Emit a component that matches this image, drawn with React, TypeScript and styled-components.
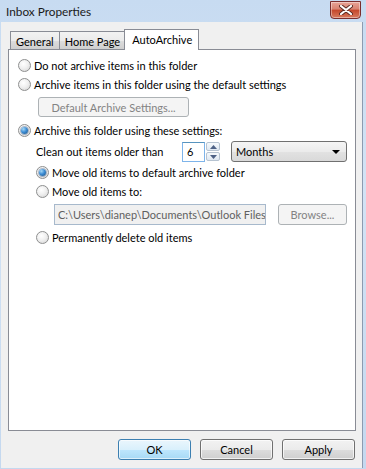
import styled, { createGlobalStyle, css } from "styled-components";

const GlobalStyle = createGlobalStyle`
  html, body {
    margin: 0;
    padding: 0;
    width: 366px;
    height: 469px;
    overflow: hidden;
    background: #ffffff;
  }
  * {
    box-sizing: border-box;
  }
`;

const Frame = styled.div`
  width: 366px;
  height: 469px;
  display: flex;
  flex-direction: column;
  background: linear-gradient(180deg, #c7dbf1 0%, #d3e3f5 40%, #c4d8ef 100%);
  font-family: "Segoe UI", Lato, "Noto Sans", sans-serif;
  font-size: 11px;
  color: #000;
`;

const TitleBar = styled.div`
  height: 22px;
  display: flex;
  align-items: flex-start;
  justify-content: space-between;
  padding: 0 5px 0 6px;
`;

const Title = styled.div`
  padding-top: 4px;
  font-size: 11.8px;
  color: #1a1a1a;
`;

const CloseButton = styled.div`
  width: 31px;
  height: 18px;
  margin-top: 1px;
  border: 1px solid #7a2e2e;
  border-radius: 0 0 4px 4px;
  background: linear-gradient(180deg, #e8a497 0%, #d88270 45%, #c5462a 50%, #d77a5f 100%);
  display: flex;
  align-items: center;
  justify-content: center;
  box-shadow: inset 0 0 0 1px rgba(255, 255, 255, 0.4);
`;

const Client = styled.div`
  flex: 1;
  margin: 0 3px 1px 1px;
  background: #f0f0f0;
  border-right: 1px solid #8c9bb0;
  display: flex;
  flex-direction: column;
  padding: 6px 6px 0 7px;
`;

const TabStrip = styled.div`
  display: flex;
  align-items: flex-end;
  height: 21px;
  padding-left: 2px;
  position: relative;
  z-index: 1;
`;

const Tab = styled.div<{ $active?: boolean }>`
  height: 18px;
  padding: 1px 5px 0 5px;
  border: 1px solid #898c95;
  border-bottom: none;
  margin-right: -1px;
  background: linear-gradient(180deg, #f2f2f2 0%, #ebebeb 50%, #dddddd 51%, #cfcfcf 100%);
  display: flex;
  align-items: center;
  ${({ $active }) =>
    $active &&
    css`
      height: 21px;
      margin-bottom: -1px;
      padding: 0 6px 2px 7px;
      margin-left: -1px;
      background: #ffffff;
    `}
`;

const Panel = styled.div`
  height: 382px;
  width: 348px;
  background: #ffffff;
  border: 1px solid #898c95;
  padding: 6px 0 0 9px;
  display: flex;
  flex-direction: column;
`;

const Option = styled.label`
  display: flex;
  align-items: center;
  gap: 3px;
  height: 19px;
  white-space: nowrap;
`;

const RadioDot = styled.span<{ $checked?: boolean }>`
  width: 13px;
  height: 13px;
  border-radius: 50%;
  border: 1px solid #8e8f8f;
  background: radial-gradient(circle at 40% 35%, #ffffff 0%, #f0f0f0 45%, #d2d2d2 100%);
  display: flex;
  align-items: center;
  justify-content: center;
  flex: none;
  ${({ $checked }) =>
    $checked &&
    css`
      &::after {
        content: "";
        width: 7px;
        height: 7px;
        border-radius: 50%;
        background: radial-gradient(circle at 35% 30%, #a6d9f5 0%, #3e8ed6 45%, #1c5180 100%);
        box-shadow: 0 0 0 1px rgba(30, 70, 120, 0.35);
      }
    `}
`;

const PushButton = styled.div<{ $disabled?: boolean; $default?: boolean; $width: number }>`
  width: ${({ $width }) => $width}px;
  height: 21px;
  border: 1px solid #707070;
  border-radius: 3px;
  background: linear-gradient(180deg, #f2f2f2 0%, #ebebeb 50%, #dddddd 51%, #cfcfcf 100%);
  box-shadow: inset 0 0 0 1px rgba(255, 255, 255, 0.7);
  display: flex;
  align-items: center;
  justify-content: center;
  color: #000;
  flex: none;
  ${({ $disabled }) =>
    $disabled &&
    css`
      border-color: #adb2b5;
      background: #f4f4f4;
      box-shadow: none;
      color: #838383;
    `}
  ${({ $default }) =>
    $default &&
    css`
      border-color: #3c7fb1;
      background: linear-gradient(180deg, #eaf6fd 0%, #d9f0fc 50%, #bee6fd 51%, #a7d9f5 100%);
      box-shadow: inset 0 0 0 1px rgba(255, 255, 255, 0.6);
    `}
`;

const DefaultSettingsButton = styled(PushButton)`
  height: 20px;
  margin: 3px 0 4px 20px;
`;

const SubBlock = styled.div`
  display: flex;
  flex-direction: column;
  padding-left: 18px;
`;

const CleanRow = styled.div`
  display: flex;
  align-items: center;
  height: 21px;
  margin: 1px 0;
`;

const CleanLabel = styled.span`
  width: 146px;
`;

const SpinBox = styled.div`
  width: 23px;
  height: 20px;
  border: 1px solid #7eb4ea;
  border-top-color: #5794bf;
  background: #fff;
  padding-left: 4px;
  display: flex;
  align-items: center;
`;

const SpinButtons = styled.div`
  display: flex;
  flex-direction: column;
  margin-left: 1px;
  gap: 1px;
`;

const SpinArrow = styled.div`
  width: 14px;
  height: 9px;
  border: 1px solid #b6c3d1;
  border-radius: 2px;
  background: linear-gradient(180deg, #f6f9fc 0%, #dfe8f1 100%);
  display: flex;
  align-items: center;
  justify-content: center;
`;

const Combo = styled.div`
  width: 116px;
  height: 21px;
  margin-left: 11px;
  border: 1px solid #707070;
  border-radius: 3px;
  background: linear-gradient(180deg, #f5f5f5 0%, #ebebeb 50%, #e2e2e2 51%, #d9d9d9 100%);
  display: flex;
  align-items: center;
  justify-content: space-between;
  padding: 0 6px 0 4px;
`;

const PathRow = styled.div`
  display: flex;
  align-items: center;
  height: 22px;
  margin: 2px 0 3px 18px;
  gap: 12px;
`;

const PathField = styled.input`
  width: 212px;
  height: 21px;
  margin: 0;
  border: 1px solid #a7b9cc;
  border-radius: 0;
  background: #f0f0f0;
  color: #5f5f5f;
  -webkit-text-fill-color: #5f5f5f;
  opacity: 1;
  padding: 0 0 0 3px;
  font: inherit;
  flex: none;
  outline: none;
`;

const Footer = styled.div`
  display: flex;
  justify-content: flex-end;
  gap: 9px;
  padding: 8px 1px 0 0;
`;

function Radio({ checked, label }: { checked?: boolean; label: string }) {
  return (
    <Option>
      <RadioDot $checked={checked} />
      <span>{label}</span>
    </Option>
  );
}

export default function App() {
  return (
    <>
      <GlobalStyle />
      <Frame>
        <TitleBar>
          <Title>Inbox Properties</Title>
          <CloseButton>
            <svg width="14" height="10" viewBox="0 0 14 10">
              <path
                d="M2 1 L12 9 M12 1 L2 9"
                stroke="#5a2a22"
                strokeWidth="4"
                strokeLinecap="round"
              />
              <path
                d="M2 1 L12 9 M12 1 L2 9"
                stroke="#ffffff"
                strokeWidth="2.2"
                strokeLinecap="round"
              />
            </svg>
          </CloseButton>
        </TitleBar>
        <Client>
          <TabStrip>
            <Tab>General</Tab>
            <Tab>Home Page</Tab>
            <Tab $active>AutoArchive</Tab>
          </TabStrip>
          <Panel>
            <Radio label="Do not archive items in this folder" />
            <Radio label="Archive items in this folder using the default settings" />
            <DefaultSettingsButton $disabled $width={151}>
              Default Archive Settings...
            </DefaultSettingsButton>
            <Radio checked label="Archive this folder using these settings:" />
            <SubBlock>
              <CleanRow>
                <CleanLabel>Clean out items older than</CleanLabel>
                <SpinBox>6</SpinBox>
                <SpinButtons>
                  <SpinArrow>
                    <svg width="7" height="4" viewBox="0 0 7 4">
                      <path d="M0 4 L3.5 0 L7 4 Z" fill="#4d6185" />
                    </svg>
                  </SpinArrow>
                  <SpinArrow>
                    <svg width="7" height="4" viewBox="0 0 7 4">
                      <path d="M0 0 L3.5 4 L7 0 Z" fill="#4d6185" />
                    </svg>
                  </SpinArrow>
                </SpinButtons>
                <Combo>
                  <span>Months</span>
                  <svg width="8" height="4" viewBox="0 0 8 4">
                    <path d="M0 0 L8 0 L4 4 Z" fill="#000" />
                  </svg>
                </Combo>
              </CleanRow>
              <Radio checked label="Move old items to default archive folder" />
              <Radio label="Move old items to:" />
              <PathRow>
                <PathField
                  disabled
                  readOnly
                  value="C:\Users\dianep\Documents\Outlook Files\archive.pst"
                />
                <PushButton $disabled $width={69}>
                  Browse...
                </PushButton>
              </PathRow>
              <Radio label="Permanently delete old items" />
            </SubBlock>
          </Panel>
          <Footer>
            <PushButton $default $width={73}>OK</PushButton>
            <PushButton $width={73}>Cancel</PushButton>
            <PushButton $width={73}>Apply</PushButton>
          </Footer>
        </Client>
      </Frame>
    </>
  );
}
